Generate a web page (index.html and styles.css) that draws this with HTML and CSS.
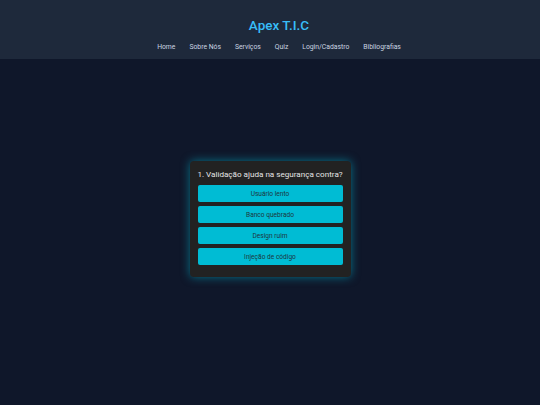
FILE: index.html
```html
<!DOCTYPE html>
<html lang="pt-BR">
<head>
<meta charset="utf-8">
<title>Apex T.I.C - Quiz</title>
<link rel="stylesheet" href="styles.css">
</head>
<body>
<header class="site-header">
  <h1 class="logo">Apex T.I.C</h1>
  <nav class="nav">
    <a href="#">Home</a>
    <a href="#">Sobre Nós</a>
    <a href="#">Serviços</a>
    <a href="#">Quiz</a>
    <a href="#">Login/Cadastro</a>
    <a href="#">Bibliografias</a>
  </nav>
</header>
<main class="main">
  <div class="quiz-card">
    <p class="question">1. Validação ajuda na segurança contra?</p>
    <div class="options">
      <button class="option">Usuário lento</button>
      <button class="option">Banco quebrado</button>
      <button class="option">Design ruim</button>
      <button class="option">Injeção de código</button>
    </div>
  </div>
</main>
</body>
</html>
```
FILE: styles.css
```css
html, body {
  margin: 0;
  padding: 0;
}
body {
  background: #0f172a;
  font-family: Roboto, "Liberation Sans", sans-serif;
  min-height: 405px;
}
.site-header {
  background: #1e293b;
  height: 59px;
  box-sizing: border-box;
  padding: 16px 0 0 18px;
  text-align: center;
}
.logo {
  margin: 0;
  font-size: 13.5px;
  line-height: 18px;
  font-weight: 500;
  color: #38bdf8;
}
.nav {
  display: flex;
  justify-content: center;
  gap: 14px;
  margin-top: 8px;
}
.nav a {
  color: #cbd5e1;
  text-decoration: none;
  font-size: 6.8px;
  line-height: 10px;
}
.main {
  display: flex;
  justify-content: center;
  padding-top: 102px;
}
.quiz-card {
  width: 161px;
  box-sizing: border-box;
  background: #222222;
  border-radius: 4px;
  padding: 8px 8px 12px;
  box-shadow: 0 0 10px rgba(0, 188, 212, 0.55);
}
.question {
  margin: 0 -2px 6px;
  color: #e5e5e5;
  font-size: 8.1px;
  line-height: 10px;
  text-align: center;
  white-space: nowrap;
}
.options {
  display: flex;
  flex-direction: column;
  gap: 4px;
}
.option {
  display: block;
  width: 100%;
  height: 17px;
  border: none;
  border-radius: 2px;
  background: #00bcd4;
  color: #1f3640;
  font-family: Roboto, "Liberation Sans", sans-serif;
  font-size: 6.6px;
  padding: 0;
}
```
